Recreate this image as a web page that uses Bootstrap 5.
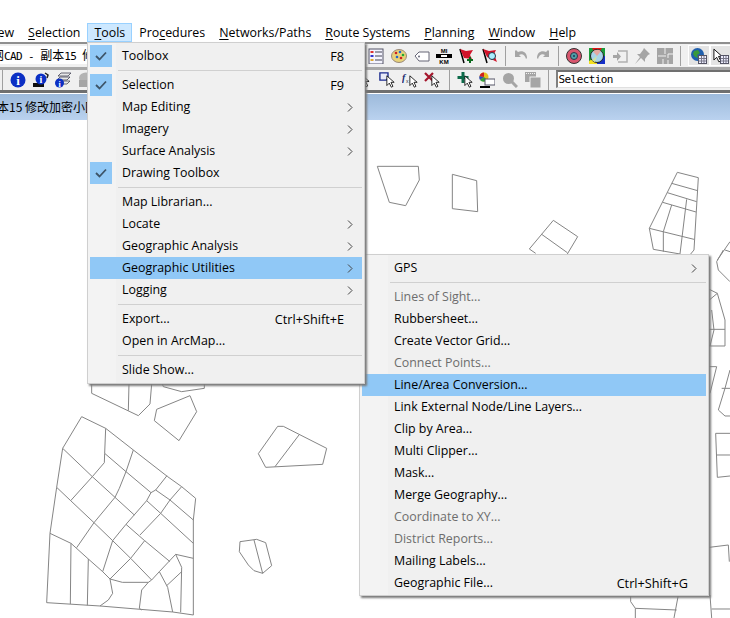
<!DOCTYPE html>
<html lang="en">
<head>
<meta charset="utf-8">
<title>TransCAD Tools menu</title>
<link href="https://cdn.jsdelivr.net/npm/bootstrap@5.3.0/dist/css/bootstrap.min.css" rel="stylesheet">
<style>
html,body{margin:0;background:#fff;}
body{width:730px;height:618px;overflow:hidden;font-family:"Open Sans","Noto Sans CJK SC",sans-serif;font-size:12.4px;color:#000;}
.app-shell{position:relative;width:730px;height:618px;overflow:hidden;}
.menu-strip{height:42px;padding-top:23px;background:#fff;white-space:nowrap;}
.menu-top{display:block;height:19px;line-height:17px;padding:0 6px;border:1px solid transparent;color:#000;text-decoration:underline transparent;}
.menu-top u{text-underline-offset:2px;text-decoration-thickness:1px;}
.menu-top.is-open{background:#cde8ff;border-color:#99d1ff;}
.menu-view{margin-left:-20px;}
.bar-one,.bar-two{background:#f0f0f0;}
.bar-one{height:25px;border-top:2px solid #8f8f8f;padding-top:1px;}
.bar-two{height:26px;border-top:3px solid #a8a8a8;border-bottom:3px solid #6f6f6f;box-shadow:0 1px 0 #fff;}
.bar-left-a{width:368px;flex:none;overflow:hidden;margin-top:1px;}
.bar-left-b{width:356px;flex:none;overflow:hidden;padding-left:2px;}
.doc-box{background:#fff;height:18px;line-height:17px;text-indent:-8px;font-family:"DejaVu Sans Mono","Noto Sans CJK SC",monospace;font-size:11px;letter-spacing:-.6px;white-space:nowrap;overflow:hidden;}
.doc-box span{font-family:"Noto Sans CJK SC",sans-serif;font-size:12px;letter-spacing:0;}
.ico-row{gap:6.8px;flex:none;}
.ico{width:16px;height:16px;flex:none;display:block;}
.tb-sep{width:1px;height:20px;background:#a0a0a0;flex:none;}
.tb-sep-shift{margin-left:1.6px;}
.tb-pressed{width:22px;height:21px;flex:none;background:#e4e4e4;border:1px solid #fff;display:flex;align-items:center;justify-content:center;margin-right:-6.8px;}
.combo-box{flex:1;height:18px;margin-top:-2px;background:#fff;border-top:2px solid #707070;border-left:2px solid #808080;border-bottom:1px solid #e0e0e0;font-family:"DejaVu Sans Mono",monospace;font-size:11px;letter-spacing:-.6px;line-height:15px;padding-left:1px;}
.title-strip{height:26px;line-height:26px;background:linear-gradient(#9dbadb,#bad2ef);white-space:nowrap;overflow:hidden;font-family:"Noto Sans CJK SC",sans-serif;font-size:12px;text-indent:-3px;margin-top:1px;}
.map-area{height:498px;position:relative;background:#fff;}
.map-area svg{position:absolute;left:0;top:0;}
.map-area path{fill:none;stroke:#858585;stroke-width:1;vector-effect:non-scaling-stroke;}
.app-menu{display:block;position:absolute;margin:0;padding:2px;border:1px solid #cfcfcf;border-radius:0;background:linear-gradient(90deg,#f3f3f3 28px,#f0f0f0 28px);box-shadow:2px 2px 2px #7a7a7a;font-size:12.4px;min-width:0;--bs-dropdown-link-hover-bg:#90c8f6;}
.menu-tools{left:87px;top:42px;width:278px;height:342px;}
.menu-utils{left:359px;top:254px;width:350px;height:342px;z-index:2;}
.app-menu .dropdown-item{display:flex;align-items:center;height:22px;line-height:20px;padding:0 8px 0 32px;color:#000;position:relative;white-space:nowrap;}
.app-menu .dropdown-item.active{background:#90c8f6;color:#000;}
.app-menu .dropdown-item.disabled{color:#6d6d6d;background:transparent;}
.app-menu .dropdown-divider{margin:3px 0 3px 28px;height:1px;border-top:1px solid #d0d0d0;opacity:1;}
.app-menu li{list-style:none;}
.menu-key{margin-left:auto;padding-right:10px;font-size:12.7px;}
.menu-arrow{margin-left:auto;width:6px;height:9px;display:block;margin-right:1px;}
.check-cell{position:absolute;left:0;top:0;width:22px;height:22px;background:#90c8f6;display:flex;align-items:center;justify-content:center;}
</style>
</head>
<body>
<svg width="0" height="0" class="d-block position-absolute">
<defs>
<symbol id="cur" viewBox="0 0 11 16"><path d="M1 1v12l3-3 2.500 5 2-1-2.400-5H10z" fill="#fff" stroke="#000" stroke-width="1"/></symbol>
<symbol id="tbl" viewBox="0 0 9 9"><rect x=".5" y=".5" width="8" height="8" fill="#eef" stroke="#556"/><path d="M1 3.500h7M1 6h7M3.500 1v7M6 1v7" stroke="#778" stroke-width="1"/></symbol>
</defs>
</svg>
<div class="app-shell">
  <nav class="menu-strip d-flex align-items-start">
    <a class="menu-top menu-view"><u>V</u>iew</a>
    <a class="menu-top"><u>S</u>election</a>
    <a class="menu-top is-open"><u>T</u>ools</a>
    <a class="menu-top">Pro<u>c</u>edures</a>
    <a class="menu-top"><u>N</u>etworks/Paths</a>
    <a class="menu-top"><u>R</u>oute Systems</a>
    <a class="menu-top"><u>P</u>lanning</a>
    <a class="menu-top"><u>W</u>indow</a>
    <a class="menu-top"><u>H</u>elp</a>
  </nav>
  <div class="bar-one d-flex align-items-start">
    <div class="bar-left-a"><div class="doc-box"><span>网</span>CAD - <span>副本</span>15 <span>修</span></div></div>
    <div class="ico-row d-flex align-items-center">
      <svg class="ico" viewBox="0 0 16 16"><rect x="1" y="1" width="14" height="15" fill="#f4f4ff" stroke="#556"/><path d="M7 4h7M7 8h7M7 12h7" stroke="#445"/><rect x="2.500" y="3" width="3" height="2" fill="#d33"/><rect x="2.500" y="7" width="3" height="2" fill="#33c"/><rect x="2.500" y="11" width="3" height="2" fill="#da3"/></svg>
      <svg class="ico" viewBox="0 0 16 16"><ellipse cx="8" cy="8" rx="7.500" ry="6.500" fill="#e7d27a" stroke="#987"/><circle cx="5" cy="5" r="1.300" fill="#c22"/><circle cx="9" cy="4" r="1.300" fill="#26c"/><circle cx="12" cy="7" r="1.300" fill="#2a3"/><circle cx="6" cy="9" r="1.300" fill="#26c"/><circle cx="10" cy="10" r="1.300" fill="#c22"/></svg>
      <svg class="ico" viewBox="0 0 16 16"><path d="M1 8l4-4h10v9H5z" fill="#fff" stroke="#667"/><circle cx="5" cy="8.500" r="1" fill="#667"/></svg>
      <svg class="ico" viewBox="0 0 16 16"><text x="8" y="5" text-anchor="middle" font-family="Liberation Sans" font-size="6" font-weight="700">MI</text><rect y="6" width="16" height="4" fill="#000"/><rect x="5" y="7" width="6" height="2" fill="#fff"/><text x="8" y="16" text-anchor="middle" font-family="Liberation Sans" font-size="6" font-weight="700">KM</text></svg>
      <svg class="ico" viewBox="0 0 16 16"><path d="M1 1l4 14" stroke="#000" stroke-width="1.500"/><path d="M1 1l6 2 7-1-3 5 2 4-8-1z" fill="#d1142a"/><path d="M11 9v6M8 12h6" stroke="#0a6a1c" stroke-width="2"/></svg>
      <svg class="ico" viewBox="0 0 16 16"><path d="M1 1l4 14" stroke="#000" stroke-width="1.500"/><path d="M1 1l6 2 7-1-2 4 3 8-10-5z" fill="#d1142a"/><circle cx="10" cy="8" r="3.500" fill="#aef" stroke="#234"/></svg>
      <div class="tb-sep"></div>
      <svg class="ico" viewBox="0 0 16 16"><path d="M2 3v6h6L6 7c3-2 6 0 7 4l1-1c0-5-4-8-9-6L3 2z" fill="#a5a5a5"/></svg>
      <svg class="ico" viewBox="0 0 16 16"><path d="M14 3v6H8l2-2c-3-2-6 0-7 4l-1-1c0-5 4-8 9-6l2-2z" fill="#a5a5a5"/></svg>
      <div class="tb-sep"></div>
      <svg class="ico" viewBox="0 0 16 16"><circle cx="8" cy="8" r="7.500" fill="#d8566e" stroke="#333"/><circle cx="8" cy="8" r="3.500" fill="#4fa0a8" stroke="#334"/><circle cx="8" cy="8" r="1" fill="#235"/></svg>
      <svg class="ico" viewBox="0 0 16 16"><rect width="16" height="16" fill="#1a9c3a"/><path d="M8 8L3 0h10z" fill="#e01414"/><path d="M8 8L0 13v3h8z" fill="#f5e020"/><path d="M8 8h8v8H8z" fill="#1530c8"/><circle cx="8" cy="8" r="6.500" fill="#a8d4e8" stroke="#222"/><path d="M8 8l4-5a6.500 6.500 0 0 0-8 .500z" fill="#e4a8a0"/><path d="M8 8L3 12a6.500 6.500 0 0 0 3 2z" fill="#cfe4a0"/></svg>
      <svg class="ico" viewBox="0 0 16 16"><path d="M6 3h9v11H6" fill="none" stroke="#b0b0b0" stroke-width="1.500"/><path d="M1 7h4V4l4 4.500-4 4.500v-3H1z" fill="#a5a5a5"/></svg>
      <svg class="ico" viewBox="0 0 16 16"><path d="M10 0l6 6-2 1-3 4v3l-4-4-6 6 5-7-3-3h3l3-4z" fill="#a5a5a5"/></svg>
      <svg class="ico" viewBox="0 0 16 16"><path d="M0 0h16v16H0z" fill="#a5a5a5"/><path d="M8 0v6M1 8h8M11 6h5M11 6v4M6 11v5M11 12v4" stroke="#f0f0f0" stroke-width="1"/></svg>
      <div class="tb-sep"></div>
      <div class="tb-pressed"><svg class="ico" viewBox="0 0 16 16"><circle cx="6.500" cy="6.500" r="6.500" fill="#1f5fae"/><path d="M3 3l4-1 2 3-3 2 1 3-3-1-2-3z" fill="#3a9a3a"/><use href="#tbl" x="7" y="7" width="9" height="9"/></svg></div>
      <div class="tb-pressed"><svg class="ico" viewBox="0 0 16 16"><use href="#cur" x="0" y="0" width="10" height="15"/><use href="#tbl" x="7" y="7" width="9" height="9"/></svg></div>
    </div>
  </div>
  <div class="bar-two d-flex align-items-center">
    <div class="bar-left-b d-flex align-items-center ico-row">
      <div class="tb-sep"></div>
      <svg class="ico" viewBox="0 0 16 16"><circle cx="8" cy="8" r="7.500" fill="#0b2fc4"/><text x="8" y="12.500" text-anchor="middle" fill="#fff" font-family="Liberation Serif" font-size="13" font-weight="700">i</text></svg>
      <svg class="ico" viewBox="0 0 16 16"><rect x="0" y="11" width="11" height="4" fill="#111"/><circle cx="8" cy="7" r="5.500" fill="#0b2fc4"/><text x="8" y="11" text-anchor="middle" fill="#fff" font-family="Liberation Serif" font-size="10" font-weight="700">i</text><path d="M12 1l3 2-1 3" fill="none" stroke="#222" stroke-width="1.500"/></svg>
      <svg class="ico" viewBox="0 0 16 16"><path d="M6 1h10l-3 3H3zM5 5h10l-3 3H2zM5 9h10l-3 3H5z" fill="#e8e8e8" stroke="#445" stroke-width=".8"/><circle cx="4.500" cy="11" r="4.500" fill="#0b2fc4"/><text x="4.500" y="14.500" text-anchor="middle" fill="#fff" font-family="Liberation Serif" font-size="8" font-weight="700">i</text></svg>
      <svg class="ico" viewBox="0 0 16 16"><ellipse cx="8" cy="6" rx="7" ry="5.500" fill="#b4b4b4"/><rect x="1" y="8" width="13" height="7" fill="#a5a5a5"/></svg>
    </div>
    <div class="ico-row d-flex align-items-center flex-grow-1">
      <svg class="ico" viewBox="0 0 16 16"><use href="#cur" x="4" y="1" width="10" height="15"/></svg>
      <svg class="ico" viewBox="0 0 16 16"><path d="M1 1h9v6l-2 2H1z" fill="#e8eaf8" stroke="#1a2a8e" stroke-width="1.500" transform="scale(.9)"/><use href="#cur" x="7" y="3" width="9" height="13"/></svg>
      <svg class="ico" viewBox="0 0 16 16"><text x="0" y="9" font-family="Liberation Serif" font-size="10" font-style="italic" font-weight="700" fill="#1a2a6e">f</text><text x="4" y="11" font-family="Liberation Sans" font-size="5" fill="#334">x</text><use href="#cur" x="7" y="3" width="9" height="13"/></svg>
      <svg class="ico" viewBox="0 0 16 16"><path d="M1 1l8 8M9 1L1 9" stroke="#a5162c" stroke-width="2.200"/><use href="#cur" x="7" y="3" width="9" height="13"/></svg>
      <div class="tb-sep tb-sep-shift"></div>
      <svg class="ico" viewBox="0 0 16 16"><path d="M4.500 0h3v4h4v3h-4v4h-3V7h-4V4h4z" fill="#0d6b4a"/><use href="#cur" x="7" y="3" width="9" height="13"/></svg>
      <svg class="ico" viewBox="0 0 16 16"><circle cx="5" cy="5" r="4.500" fill="#e8c020"/><path d="M5 5L1 8a5 5 0 0 1-.500-4z" fill="#2a4ac0"/><path d="M5 5V.500A4.500 4.500 0 0 0 .6 4z" fill="#d02020"/><path d="M5 5l3 3a4.500 4.500 0 0 1-7 0z" fill="#30a040"/><rect x="6" y="7" width="10" height="6" fill="#fff" stroke="#556"/><path d="M1 15h10" stroke="#000" stroke-width="2"/></svg>
      <svg class="ico" viewBox="0 0 16 16"><circle cx="6.500" cy="6.500" r="5.500" fill="#a5a5a5"/><path d="M10 10l5 5" stroke="#a5a5a5" stroke-width="3"/></svg>
      <svg class="ico" viewBox="0 0 16 16"><rect width="11" height="10" fill="#a5a5a5"/><path d="M1 1.500h9" stroke="#f0f0f0" stroke-dasharray="1 1"/><rect x="5" y="5" width="11" height="11" fill="#a5a5a5" stroke="#f0f0f0"/></svg>
      <div class="tb-sep"></div>
      <div class="combo-box">Selection</div>
    </div>
  </div>
  <div class="title-strip"><span>本15 修改加密小区</span></div>
  <div class="map-area">
    <svg width="730" height="498" viewBox="0 120 730 498">
      <g transform="translate(0 380) scale(.33333)">
        <path d="M245 110L317 145 400 210 503 290 545 320 587 355 580 420V705L518 696 300 678 140 668 150 460 170 322 188 205Z"/>
        <path d="M317 145L314 220 313 248 277 290 212 362"/>
        <path d="M188 205L277 290 345 352 403 405"/>
        <path d="M400 210L378 275 358 325 345 352 282 428 230 503"/>
        <path d="M314 220L378 275 453 338"/>
        <path d="M501 287L467 330 453 338 440 362 378 433 338 482 308 575"/>
        <path d="M467 330L510 360 580 420"/>
        <path d="M545 320L510 360 482 400 420 465"/>
        <path d="M434 482L392 535 330 597"/>
        <path d="M440 362L482 400 580 490"/>
        <path d="M378 433L434 482 510 545"/>
        <path d="M170 322L212 362 282 428 338 482 392 535 455 600"/>
        <path d="M150 460L213 490 265 537 308 575 330 597 338 640 325 660 300 678"/>
        <path d="M213 490L211 672M265 537L262 676"/>
        <path d="M330 597L367 607H445L455 600 478 575 527 523 580 535"/>
        <path d="M445 607L425 630 418 685 425 690"/>
        <path d="M478 575L503 622 518 696"/>
        <path d="M527 523L545 562 542 697M545 575L500 617"/>
        <path d="M275 12V40L415 107 450 72 455 12M387 12L385 92"/>
        <path d="M487 12L490 20 545 35 613 25V12"/>
        <path d="M470 88L570 47 590 95 537 182 463 122Z"/>
        <path d="M833 139H850L980 205 968 253 797 262 775 221ZM897 165L825 260"/>
        <path d="M720 485L770 478 797 488 815 557 788 580 762 572 745 555 718 515ZM762 480L788 580"/>
      </g>
      <g transform="translate(370 150) scale(.33333)">
        <path d="M22 49H145L148 90 107 167 58 157Z"/>
        <path d="M247 73L320 92 323 185 247 176Z"/>
        <path d="M550 211L478 297 497 310M550 211L623 260 592 312M515 253L592 308"/>
        <path d="M922 67L838 235 850 298 930 312M922 67L985 83 972 300 962 312"/>
        <path d="M905 100L983 122M892 128L980 155M878 157L978 186M838 235L972 268M905 165L880 245V305M950 148L930 312"/>
        <path d="M1080 275L1042 330M1065 300L1080 305"/>
      </g>
      <g transform="translate(360 250) scale(.33333)">
        <path d="M1090 0L1070 35 1075 60 1110 95"/>
        <path d="M1048 118L1072 130 1095 210V288H1048M1048 238H1095M1055 180L1062 240 1050 288M1048 150L1072 130"/>
        <path d="M1048 350H1070L1050 430M1110 360L1095 415 1075 480 1095 498H1110M1085 415H1110"/>
      </g>
      <g transform="translate(360 430) scale(.33333)">
        <path d="M1110 10H1067L1072 142 1110 138M1070 75H1110"/>
        <path d="M1048 352L1105 345 1108 395"/>
        <path d="M812 495V515L826 535 950 540M826 535V564M955 495L942 564M1050 495L1055 564M1055 537H1110"/>
      </g>
    </svg>
  </div>

  <ul class="dropdown-menu show app-menu menu-tools">
    <li><a class="dropdown-item"><span class="check-cell"><svg width="12" height="10" viewBox="0 0 12 10"><path d="M1 5l3.500 3.500L11 1.500" fill="none" stroke="#3d5468" stroke-width="1.800"/></svg></span>Toolbox<span class="menu-key">F8</span></a></li>
    <li><hr class="dropdown-divider"></li>
    <li><a class="dropdown-item"><span class="check-cell"><svg width="12" height="10" viewBox="0 0 12 10"><path d="M1 5l3.500 3.500L11 1.500" fill="none" stroke="#3d5468" stroke-width="1.800"/></svg></span>Selection<span class="menu-key">F9</span></a></li>
    <li><a class="dropdown-item">Map Editing<svg class="menu-arrow" viewBox="0 0 6 9"><path d="M1 .5l4 4-4 4" fill="none" stroke="#444"/></svg></a></li>
    <li><a class="dropdown-item">Imagery<svg class="menu-arrow" viewBox="0 0 6 9"><path d="M1 .5l4 4-4 4" fill="none" stroke="#444"/></svg></a></li>
    <li><a class="dropdown-item">Surface Analysis<svg class="menu-arrow" viewBox="0 0 6 9"><path d="M1 .5l4 4-4 4" fill="none" stroke="#444"/></svg></a></li>
    <li><a class="dropdown-item"><span class="check-cell"><svg width="12" height="10" viewBox="0 0 12 10"><path d="M1 5l3.500 3.500L11 1.500" fill="none" stroke="#3d5468" stroke-width="1.800"/></svg></span>Drawing Toolbox</a></li>
    <li><hr class="dropdown-divider"></li>
    <li><a class="dropdown-item">Map Librarian...</a></li>
    <li><a class="dropdown-item">Locate<svg class="menu-arrow" viewBox="0 0 6 9"><path d="M1 .5l4 4-4 4" fill="none" stroke="#444"/></svg></a></li>
    <li><a class="dropdown-item">Geographic Analysis<svg class="menu-arrow" viewBox="0 0 6 9"><path d="M1 .5l4 4-4 4" fill="none" stroke="#444"/></svg></a></li>
    <li><a class="dropdown-item active">Geographic Utilities<svg class="menu-arrow" viewBox="0 0 6 9"><path d="M1 .5l4 4-4 4" fill="none" stroke="#444"/></svg></a></li>
    <li><a class="dropdown-item">Logging<svg class="menu-arrow" viewBox="0 0 6 9"><path d="M1 .5l4 4-4 4" fill="none" stroke="#444"/></svg></a></li>
    <li><hr class="dropdown-divider"></li>
    <li><a class="dropdown-item">Export...<span class="menu-key">Ctrl+Shift+E</span></a></li>
    <li><a class="dropdown-item">Open in ArcMap...</a></li>
    <li><hr class="dropdown-divider"></li>
    <li><a class="dropdown-item">Slide Show...</a></li>
  </ul>

  <ul class="dropdown-menu show app-menu menu-utils">
    <li><a class="dropdown-item">GPS<svg class="menu-arrow" viewBox="0 0 6 9"><path d="M1 .5l4 4-4 4" fill="none" stroke="#444"/></svg></a></li>
    <li><hr class="dropdown-divider"></li>
    <li><a class="dropdown-item disabled">Lines of Sight...</a></li>
    <li><a class="dropdown-item">Rubbersheet...</a></li>
    <li><a class="dropdown-item">Create Vector Grid...</a></li>
    <li><a class="dropdown-item disabled">Connect Points...</a></li>
    <li><a class="dropdown-item active">Line/Area Conversion...</a></li>
    <li><a class="dropdown-item">Link External Node/Line Layers...</a></li>
    <li><a class="dropdown-item">Clip by Area...</a></li>
    <li><a class="dropdown-item">Multi Clipper...</a></li>
    <li><a class="dropdown-item">Mask...</a></li>
    <li><a class="dropdown-item">Merge Geography...</a></li>
    <li><a class="dropdown-item disabled">Coordinate to XY...</a></li>
    <li><a class="dropdown-item disabled">District Reports...</a></li>
    <li><a class="dropdown-item">Mailing Labels...</a></li>
    <li><a class="dropdown-item">Geographic File...<span class="menu-key">Ctrl+Shift+G</span></a></li>
  </ul>
</div>
</body>
</html>
